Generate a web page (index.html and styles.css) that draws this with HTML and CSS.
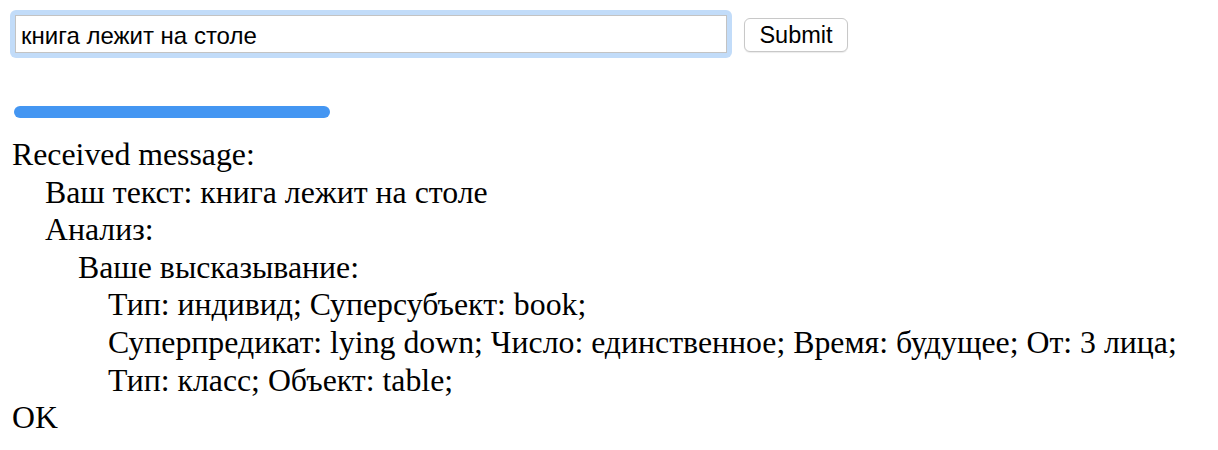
FILE: index.html
```html
<!DOCTYPE html>
<html lang="ru">
<head>
<meta charset="utf-8">
<title>Анализ</title>
<link rel="stylesheet" href="styles.css">
</head>
<body>
<div class="page">
  <form class="query">
    <span class="focus-ring"><input class="query-input" type="text" value="книга лежит на столе"></span>
    <button class="submit" type="button">Submit</button>
  </form>
  <div class="progress"></div>
  <div class="result">
    <div class="line">Received message:</div>
    <div class="level level-1">
      <div class="line">Ваш текст: книга лежит на столе</div>
      <div class="line">Анализ:</div>
      <div class="level level-2">
        <div class="line">Ваше высказывание:</div>
        <div class="level level-3">
          <div class="line">Тип: индивид; Суперсубъект: book;</div>
          <div class="line">Суперпредикат: lying down; Число: единственное; Время: будущее; От: 3 лица;</div>
          <div class="line">Тип: класс; Объект: table;</div>
        </div>
      </div>
    </div>
    <div class="line">OK</div>
  </div>
</div>
</body>
</html>
```
FILE: styles.css
```css
html, body {
  margin: 0;
  padding: 0;
  background: #ffffff;
}

.page {
  padding: 10px 0 0 10px;
}

.query {
  display: flex;
  align-items: flex-start;
  gap: 12px;
  margin: 0;
}

.focus-ring {
  display: block;
  padding: 5px;
  background: #c2dcf9;
  border-radius: 6px;
}

.query-input {
  display: block;
  box-sizing: border-box;
  width: 712px;
  height: 38px;
  margin: 0;
  padding: 3px 5px 0;
  border: 1px solid #c3c3c3;
  border-radius: 0;
  background: #ffffff;
  outline: none;
  font-family: "Liberation Sans", Arial, sans-serif;
  font-size: 24px;
  color: #000000;
}

.submit {
  box-sizing: border-box;
  margin-top: 8px;
  width: 104px;
  height: 34px;
  padding: 1px 0 0;
  border: 1px solid #c8c8c8;
  border-radius: 6px;
  background: #ffffff;
  box-shadow: 0 1px 1px rgba(0, 0, 0, 0.08);
  font-family: "Liberation Sans", Arial, sans-serif;
  font-size: 23.5px;
  color: #000000;
}

.progress {
  width: 316px;
  height: 12px;
  margin: 48px 0 0 4px;
  border-radius: 6px;
  background: #4496f2;
}

.result {
  margin-top: 18px;
  padding-left: 2px;
  font-family: "Liberation Serif", "Times New Roman", serif;
  font-size: 31.8px;
  line-height: 37.6px;
  color: #000000;
}

.level-1 {
  padding-left: 33px;
}

.level-2 {
  padding-left: 33px;
}

.level-3 {
  padding-left: 30px;
}
```
